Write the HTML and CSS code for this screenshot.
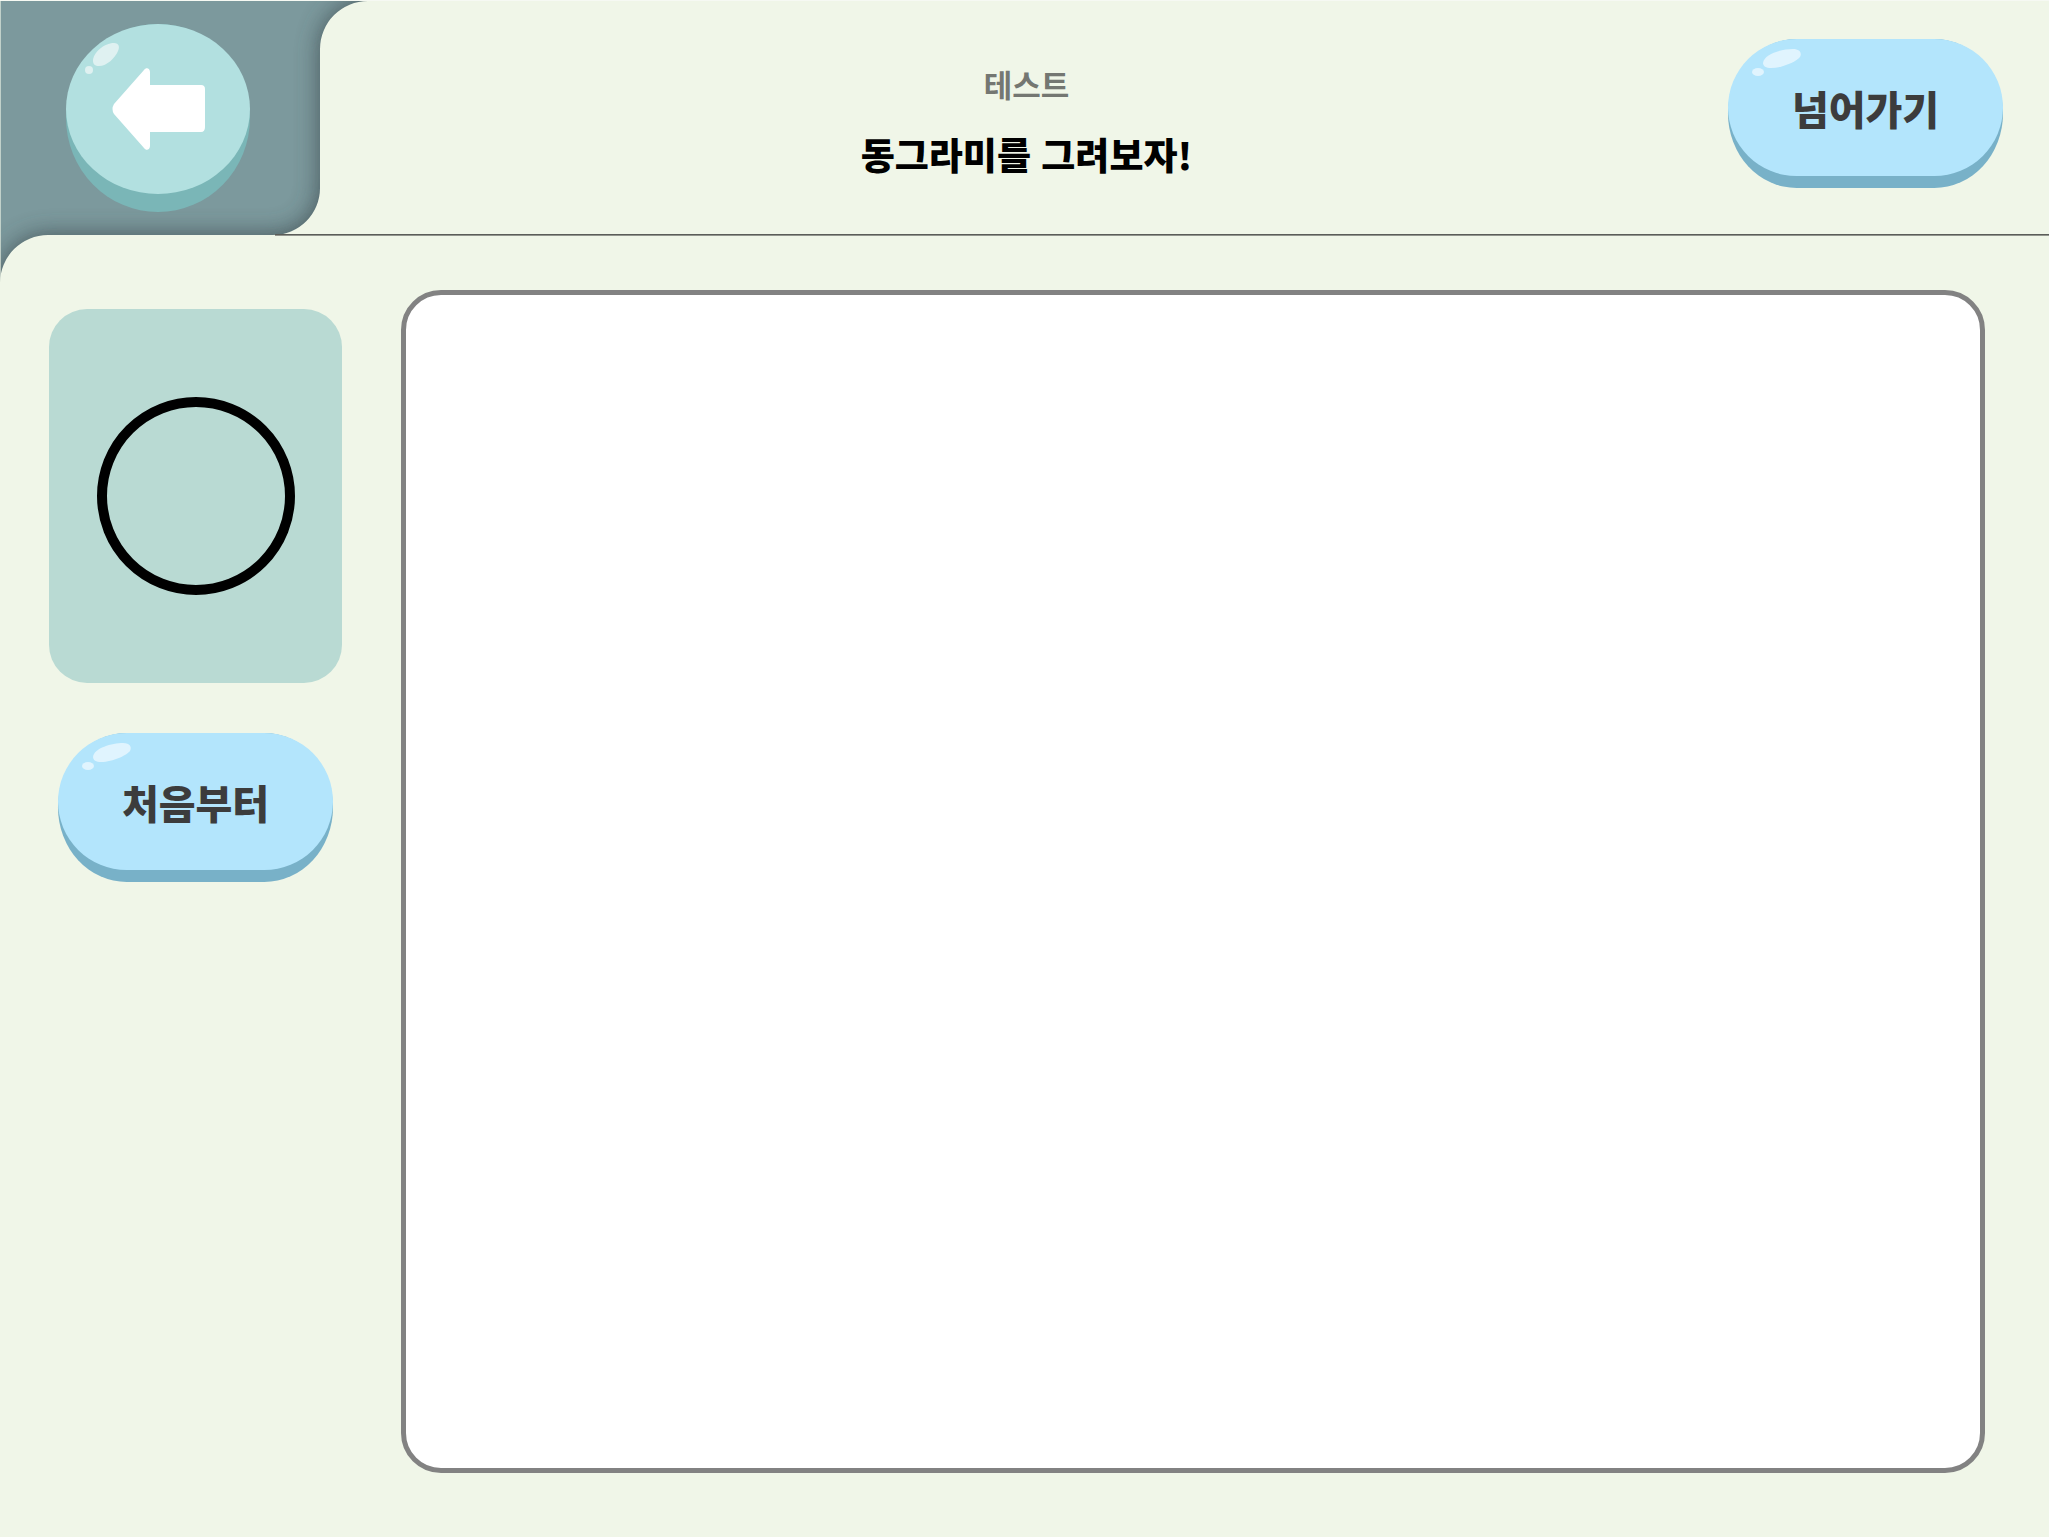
FILE: index.html
```html
<!DOCTYPE html>
<html lang="ko">
<head>
<meta charset="utf-8">
<meta name="viewport" content="width=device-width, initial-scale=1">
<title>동그라미를 그려보자!</title>
<link rel="stylesheet" href="styles.css">
</head>
<body>
<div class="page">
  <header class="header">
    <svg class="corner" viewBox="0 0 368 284" aria-hidden="true">
      <defs>
        <filter id="corner-shadow" x="-20%" y="-20%" width="140%" height="140%">
          <feGaussianBlur stdDeviation="12"/>
        </filter>
        <path id="sheet" d="M368 -60V1A48 48 0 0 0 320 49V188A47 47 0 0 1 273 235H48A48 48 0 0 0 0 283H-60V400H460V-60Z"/>
      </defs>
      <rect width="368" height="284" fill="#7c999d"/>
      <use href="#sheet" fill="#3c4c50" opacity=".85" filter="url(#corner-shadow)"/>
      <use href="#sheet" fill="#f0f6e8"/>
      <path d="M0 0H1V284H0Z" fill="#f0f6e8" opacity=".6"/>
    </svg>
    <button class="back" type="button" aria-label="뒤로">
      <svg viewBox="0 0 184 188" aria-hidden="true">
        <ellipse cx="92" cy="94" rx="92" ry="94" fill="#7ab6b7"/>
        <ellipse cx="92" cy="85" rx="92" ry="85" fill="#b2e0e0"/>
        <path fill="#dff1f1" d="M27 37C27 29 38 19 48 19C53 19 54 23 52 27C49 34 41 42 33 42C29 42 27 40 27 37Z"/>
        <circle cx="23" cy="46" r="4" fill="#dff1f1"/>
        <path fill="#fff" d="M48 80L78 46C80 43 84 44 84 48V61H135Q139 61 139 65V103Q139 108 135 108H84V122C84 126 80 127 78 124L48 90Q45 85 48 80Z"/>
      </svg>
    </button>
    <div class="heading">
      <p class="category">테스트</p>
      <h1 class="title">동그라미를 그려보자!</h1>
    </div>
    <button class="pill skip" type="button">
      <svg class="gloss" viewBox="0 0 80 40" aria-hidden="true">
        <path d="M35 24C36 15 54 10 65 10C72 10 74 14 72 18C69 22 55 29 43 29C38 29 35 27 35 24Z"/>
        <ellipse cx="30" cy="33" rx="6" ry="4"/>
      </svg>
      <span class="face">넘어가기</span>
    </button>
  </header>
  <main class="main">
    <aside class="side">
      <div class="example">
        <svg class="shape" viewBox="0 0 198 198" role="img" aria-label="동그라미">
          <circle cx="99" cy="99" r="94" fill="none" stroke="#000" stroke-width="10"/>
        </svg>
      </div>
      <button class="pill" type="button">
        <svg class="gloss" viewBox="0 0 80 40" aria-hidden="true">
          <path d="M35 24C36 15 54 10 65 10C72 10 74 14 72 18C69 22 55 29 43 29C38 29 35 27 35 24Z"/>
          <ellipse cx="30" cy="33" rx="6" ry="4"/>
        </svg>
        <span class="face">처음부터</span>
      </button>
    </aside>
    <canvas class="board" aria-label="그림판"></canvas>
  </main>
</div>
</body>
</html>
```
FILE: styles.css
```css
* {
  box-sizing: border-box;
}

body {
  margin: 0;
  background: #f0f6e8;
  color: #000;
  font-family: "Noto Sans CJK KR", sans-serif;
}

.page {
  display: flex;
  flex-direction: column;
  min-height: 100vh;
  border-top: 1px solid #f6f9f3;
}

button {
  border: 0;
  padding: 0;
  background: none;
  font: inherit;
  color: inherit;
  cursor: pointer;
}

/* Header */
.header {
  position: relative;
  display: grid;
  grid-template-columns: 1fr auto 1fr;
  align-items: start;
  min-height: 235px;
  background: linear-gradient(#5b5d59 50%, #92958e 50%) 275px 100% / 100% 2px no-repeat;
}

/* Dark tab behind the back button, with its rounded cut-out */
.corner {
  position: absolute;
  top: -1px;
  left: 0;
  width: 368px;
  height: 284px;
  clip-path: polygon(0 1px, 100% 1px, 100% 234px, 275px 234px, 275px 100%, 0 100%);
}

.back {
  position: relative;
  justify-self: start;
  width: 184px;
  height: 188px;
  margin: 23px 0 0 66px;
}

.back svg {
  display: block;
}

.heading {
  padding: 59px 0 0 4px;
  text-align: center;
}

.category,
.title {
  margin: 0;
  font-weight: 700;
}

.category {
  color: #747772;
  font-size: 31px;
  line-height: 48px;
}

.title {
  margin-top: 20px;
  font-size: 37px;
  font-weight: 900;
  line-height: 52px;
}

/* Raised pill button: the base shows under the face */
.pill {
  position: relative;
  width: 275px;
  height: 149px;
  padding-bottom: 12px;
  border-radius: 25% / 50%;
  background: #78b1c8;
}

.face {
  display: grid;
  place-items: center;
  height: 137px;
  border-radius: 25% / 50%;
  background: #b3e5fc;
  color: #3c3c3c;
  font-size: 40px;
  font-weight: 900;
  line-height: 60px;
}

.gloss {
  position: absolute;
  top: 0;
  left: 0;
  width: 80px;
  height: 40px;
  fill: #e0f4fe;
}

.skip {
  justify-self: end;
  margin: 38px 46px 0 0;
}

/* Drawing area */
.main {
  flex: 1;
  display: flex;
  gap: 59px;
  padding: 54px 64px 64px 49px;
}

.side {
  display: flex;
  flex: none;
  flex-direction: column;
  align-items: center;
  gap: 50px;
  width: 293px;
  padding-top: 19px;
}

.example {
  display: grid;
  place-items: center;
  width: 100%;
  height: 374px;
  border-radius: 38px;
  background: #b9dad3;
}

.shape {
  width: 198px;
  height: 198px;
}

.board {
  flex: 1;
  min-width: 0;
  min-height: 600px;
  border: 5px solid #828282;
  border-radius: 40px;
  background: #fff;
}
```
